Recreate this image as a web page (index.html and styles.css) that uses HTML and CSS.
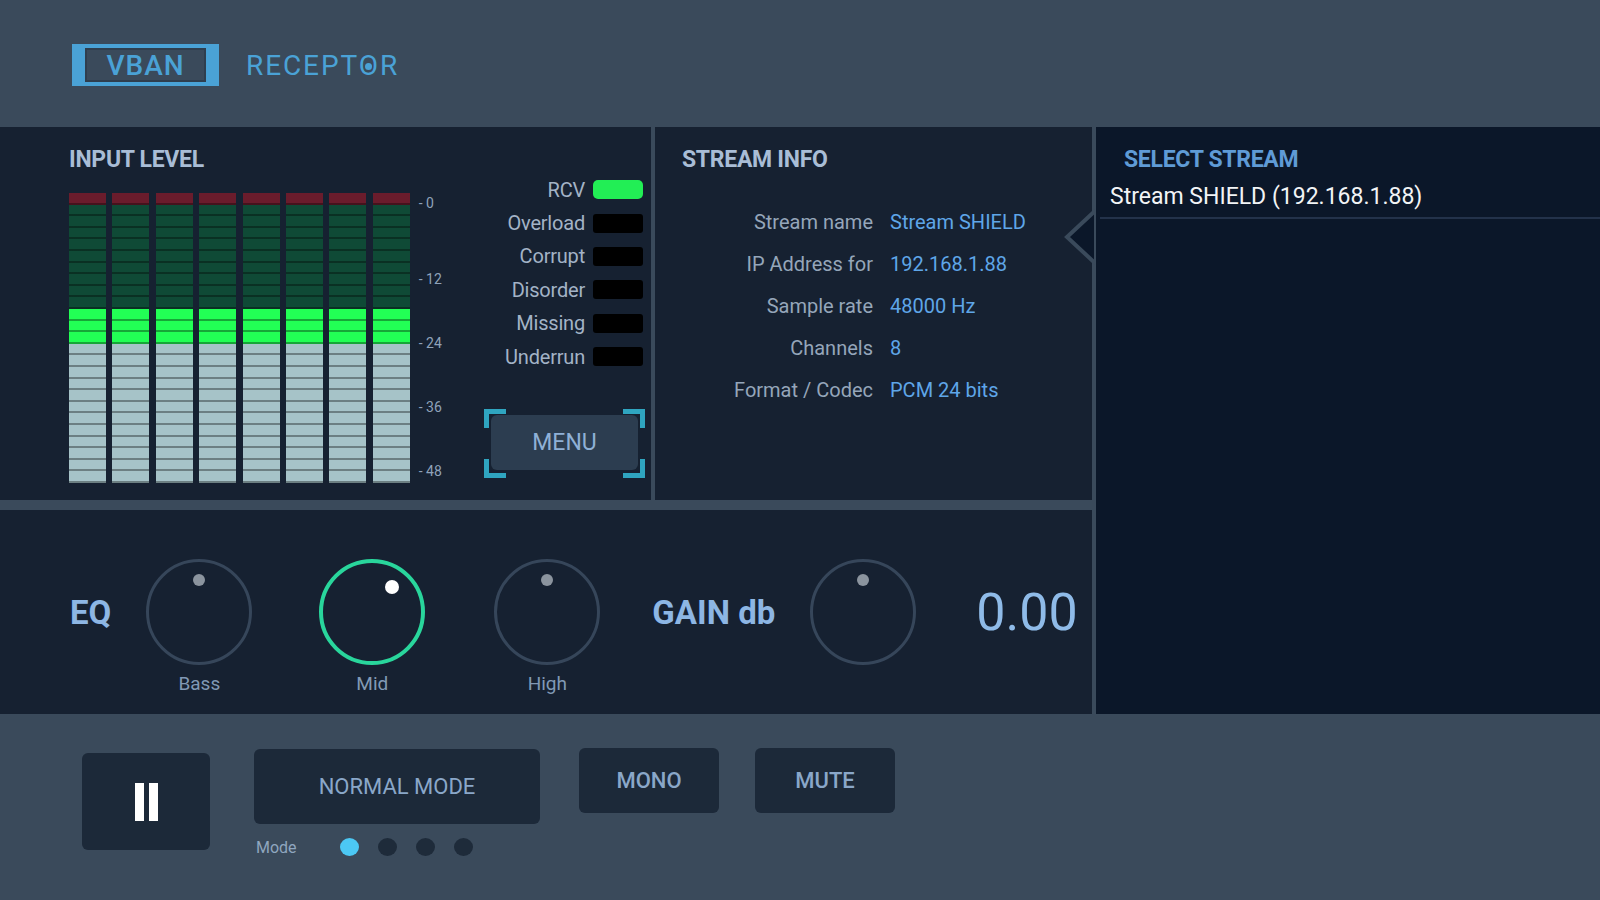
FILE: index.html
```html
<!DOCTYPE html>
<html lang="en">
<head>
    <meta charset="UTF-8">
    <meta name="viewport" content="width=device-width, initial-scale=1.0">
    <title>VBAN Receptor</title>
    <link rel="stylesheet" href="styles.css">
</head>
<body>
    <header class="topbar">
        <div class="logo-box"><span class="logo-vban">VBAN</span></div>
        <div class="logo-title">RECEPT<span class="logo-o">O</span>R</div>
    </header>

    <main class="console">
        <!-- input meters + stream status -->
        <section class="panel input-panel">
            <h2 class="panel-title">INPUT LEVEL</h2>
            <div class="input-body">
                <div class="meter">
                    <div class="meter-col"></div>
                    <div class="meter-col"></div>
                    <div class="meter-col"></div>
                    <div class="meter-col"></div>
                    <div class="meter-col"></div>
                    <div class="meter-col"></div>
                    <div class="meter-col"></div>
                    <div class="meter-col"></div>
                </div>
                <div class="meter-scale">
                    <span>- 0</span>
                    <span>- 12</span>
                    <span>- 24</span>
                    <span>- 36</span>
                    <span>- 48</span>
                </div>
                <div class="status">
                    <div class="status-row"><span>RCV</span><i class="led on"></i></div>
                    <div class="status-row"><span>Overload</span><i class="led"></i></div>
                    <div class="status-row"><span>Corrupt</span><i class="led"></i></div>
                    <div class="status-row"><span>Disorder</span><i class="led"></i></div>
                    <div class="status-row"><span>Missing</span><i class="led"></i></div>
                    <div class="status-row"><span>Underrun</span><i class="led"></i></div>
                    <div class="menu-frame">
                        <span class="corner tl"></span>
                        <span class="corner tr"></span>
                        <span class="corner bl"></span>
                        <span class="corner br"></span>
                        <button class="menu-btn">MENU</button>
                    </div>
                </div>
            </div>
        </section>

        <section class="panel info-panel">
            <h2 class="panel-title">STREAM INFO</h2>
            <dl class="info-grid">
                <dt>Stream name</dt><dd>Stream SHIELD</dd>
                <dt>IP Address for</dt><dd>192.168.1.88</dd>
                <dt>Sample rate</dt><dd>48000 Hz</dd>
                <dt>Channels</dt><dd>8</dd>
                <dt>Format / Codec</dt><dd>PCM 24 bits</dd>
            </dl>
        </section>

        <section class="panel select-panel">
            <svg class="select-tab" width="32" height="56" viewBox="0 0 32 56">
                <polygon points="32,1 3,28 32,55" fill="#0b1729" stroke="#3a4a5b" stroke-width="4"/>
            </svg>
            <h2 class="panel-title select-title">SELECT STREAM</h2>
            <div class="stream-item">Stream SHIELD (192.168.1.88)</div>
        </section>

        <!-- equalizer and gain -->
        <section class="panel eq-panel">
            <div class="eq-label">EQ</div>
            <div class="knob-group bass">
                <div class="knob"><span class="knob-dot"></span></div>
                <div class="knob-name">Bass</div>
            </div>
            <div class="knob-group mid">
                <div class="knob active"><span class="knob-dot"></span></div>
                <div class="knob-name">Mid</div>
            </div>
            <div class="knob-group high">
                <div class="knob"><span class="knob-dot"></span></div>
                <div class="knob-name">High</div>
            </div>
            <div class="eq-label gain-label">GAIN db</div>
            <div class="knob-group gain">
                <div class="knob"><span class="knob-dot"></span></div>
            </div>
            <div class="gain-value">0.00</div>
        </section>
    </main>

    <footer class="transport">
        <button class="btn pause-btn"><span class="pause-bar"></span><span class="pause-bar"></span></button>
        <div class="mode-block">
            <button class="btn mode-btn">NORMAL MODE</button>
            <div class="mode-row">
                <span class="mode-text">Mode</span>
                <span class="mode-dot current"></span>
                <span class="mode-dot"></span>
                <span class="mode-dot"></span>
                <span class="mode-dot"></span>
            </div>
        </div>
        <button class="btn small-btn mono-btn">MONO</button>
        <button class="btn small-btn mute-btn">MUTE</button>
    </footer>
</body>
</html>
```

FILE: styles.css
```css
* {
    box-sizing: border-box;
}

body {
    margin: 0;
    width: 1600px;
    height: 900px;
    overflow: hidden;
    background-color: #3a4a5b;
    font-family: Roboto, "Liberation Sans", sans-serif;
}

/* header / logo */
.topbar {
    height: 127px;
    display: flex;
    align-items: center;
    padding: 3px 0 0 72px;
}

.logo-box {
    width: 147px;
    height: 42px;
    padding: 4px 13px;
    background-color: #4aa2d6;
}

.logo-vban {
    display: flex;
    align-items: center;
    justify-content: center;
    height: 100%;
    background-color: #3a4a5b;
    box-shadow: inset 0 0 0 2px #2f3e4e;
    color: #4aa2d6;
    font-size: 28px;
    font-weight: 500;
    letter-spacing: 1px;
}

.logo-title {
    margin-left: 27px;
    color: #4aa2d6;
    font-size: 28px;
    letter-spacing: 1.9px;
}

.logo-o {
    position: relative;
}

.logo-o::after {
    content: "";
    position: absolute;
    left: 50%;
    top: 52%;
    width: 7px;
    height: 7px;
    margin: -3px 0 0 -4px;
    border-radius: 50%;
    background-color: #4aa2d6;
}

/* main grid */
.console {
    display: grid;
    grid-template-columns: 651px 437px 1fr;
    grid-template-rows: 373px 204px;
    gap: 10px 4px;
}

.panel {
    background-color: #162131;
}

.panel-title {
    margin: 0;
    height: 46px;
    padding-top: 20px;
    font-size: 23px;
    line-height: 26px;
    font-weight: 700;
    color: #a9bdd6;
    letter-spacing: -0.3px;
}

/* input level */
.input-panel {
    padding-left: 69px;
    padding-right: 8px;
}

.input-body {
    display: flex;
}

.meter {
    display: flex;
    gap: 6.4px;
    margin-top: 20px;
}

.meter-col {
    width: 37px;
    height: 290px;
    background:
        repeating-linear-gradient(to bottom, transparent 0 9.6px, rgba(0, 0, 0, 0.35) 9.6px 11.6px),
        linear-gradient(to bottom,
            #6a1c2c 0 11.6px,
            #0f4a36 11.6px 116px,
            #22ff55 116px 150.8px,
            #a6c3c8 150.8px 290px);
}

.meter-scale {
    display: flex;
    flex-direction: column;
    margin: 22px 0 0 9px;
    font-size: 14px;
    line-height: 16px;
    color: #8fa2b9;
    gap: 48px;
}

.meter-scale span:first-child {
    margin-bottom: 12px;
}

.status {
    flex: 1;
    display: flex;
    flex-direction: column;
    align-items: flex-end;
}

.status-row {
    display: flex;
    align-items: center;
    height: 33.4px;
    font-size: 20px;
    color: #a3b3c6;
    letter-spacing: -0.2px;
}

.led {
    width: 50px;
    height: 19px;
    margin-left: 8px;
    border-radius: 3px;
    background-color: #000;
}

.led.on {
    border-radius: 5px;
    background-color: #22ee55;
}

.menu-frame {
    position: relative;
    width: 161px;
    height: 69px;
    margin-top: 36px;
    margin-right: -2px;
    padding: 6px 7px 8px 7px;
}

.corner {
    position: absolute;
    width: 22px;
    height: 19px;
    border: 0 solid #2fa5c0;
}

.corner.tl { left: 0; top: 0; border-width: 5px 0 0 5px; }
.corner.tr { right: 0; top: 0; border-width: 5px 5px 0 0; }
.corner.bl { left: 0; bottom: 0; border-width: 0 0 5px 5px; }
.corner.br { right: 0; bottom: 0; border-width: 0 5px 5px 0; }

.menu-btn {
    width: 100%;
    height: 100%;
    border: none;
    border-radius: 6px;
    background-color: #2c3d50;
    color: #8fb0d6;
    font-family: Roboto, "Liberation Sans", sans-serif;
    font-size: 23px;
}

/* stream info */
.info-panel {
    padding-left: 27px;
}

.info-grid {
    display: grid;
    grid-template-columns: 191px 1fr;
    grid-auto-rows: 42px;
    column-gap: 17px;
    align-items: center;
    margin: 28px 0 0 0;
    font-size: 20px;
}

.info-grid dt {
    text-align: right;
    color: #95a6ba;
}

.info-grid dd {
    margin: 0;
    color: #5fa6e8;
}

/* select stream */
.select-panel {
    position: relative;
    grid-column: 3;
    grid-row: 1 / 3;
    background-color: #0b1729;
}

.select-tab {
    position: absolute;
    left: -32px;
    top: 82px;
}

.select-title {
    padding-left: 28px;
    color: #5f9bd6;
}

.stream-item {
    margin: 8px 0 0 4px;
    padding-left: 10px;
    height: 38px;
    line-height: 32px;
    border-bottom: 2px solid #23324a;
    color: #f2f4f6;
    font-size: 23px;
}

/* eq panel */
.eq-panel {
    grid-column: 1 / 3;
    grid-row: 2;
    display: flex;
    align-items: flex-start;
    padding: 49px 0 0 70px;
}

.eq-label {
    height: 106px;
    display: flex;
    align-items: center;
    font-size: 33px;
    font-weight: 700;
    color: #8db6e4;
}

.gain-label {
    margin-left: 52px;
}

.knob-group {
    width: 106px;
}

.knob-group.bass { margin-left: 35px; }
.knob-group.mid { margin-left: 67px; }
.knob-group.high { margin-left: 69px; }
.knob-group.gain { margin-left: 35px; }

.knob {
    position: relative;
    width: 106px;
    height: 106px;
    border: 3px solid #36465a;
    border-radius: 50%;
}

.knob-dot {
    position: absolute;
    left: 44px;
    top: 12px;
    width: 12px;
    height: 12px;
    border-radius: 50%;
    background-color: #8b949e;
}

.knob.active {
    border: 4px solid #29d69c;
}

.knob.active .knob-dot {
    left: 62px;
    top: 17px;
    width: 14px;
    height: 14px;
    background-color: #ffffff;
}

.knob-name {
    margin-top: 8px;
    text-align: center;
    font-size: 19px;
    line-height: 22px;
    color: #8199b5;
}

.gain-value {
    height: 106px;
    display: flex;
    align-items: center;
    margin-left: 60px;
    font-size: 52px;
    color: #8fbbe8;
}

/* transport bar */
.transport {
    display: flex;
    align-items: flex-start;
    padding: 35px 0 0 82px;
}

.btn {
    border: none;
    border-radius: 6px;
    background-color: #1c2939;
    color: #8aa7c9;
    font-family: Roboto, "Liberation Sans", sans-serif;
    font-size: 22px;
}

.pause-btn {
    width: 128px;
    height: 97px;
    margin-top: 4px;
    display: flex;
    align-items: center;
    justify-content: center;
    gap: 5px;
}

.pause-bar {
    width: 9px;
    height: 38px;
    background-color: #ffffff;
}

.mode-block {
    margin-left: 44px;
}

.mode-btn {
    width: 286px;
    height: 75px;
}

.mode-row {
    display: flex;
    align-items: center;
    height: 18px;
    margin-top: 14px;
    padding-left: 2px;
}

.mode-text {
    width: 84px;
    font-size: 16px;
    color: #8fa6bf;
}

.mode-dot {
    width: 19px;
    height: 18px;
    margin-right: 19px;
    border-radius: 50%;
    background-color: #1e2b3a;
}

.mode-dot.current {
    background-color: #4cc8f4;
}

.small-btn {
    width: 140px;
    height: 65px;
    margin-top: -1px;
    font-weight: 500;
}

.mono-btn {
    margin-left: 39px;
}

.mute-btn {
    margin-left: 36px;
}
```
